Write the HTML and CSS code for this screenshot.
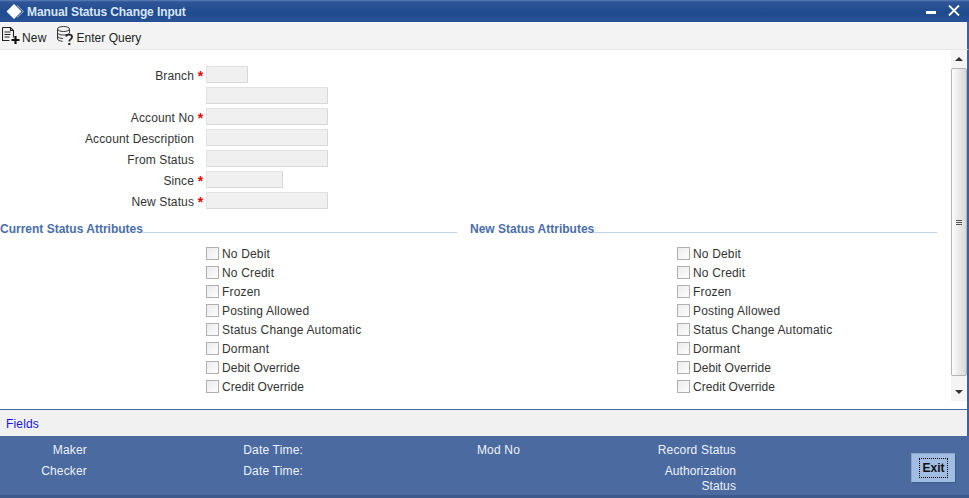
FILE: index.html
```html
<!DOCTYPE html>
<html lang="en">
<head>
<meta charset="utf-8">
<title>Manual Status Change Input</title>
<link rel="stylesheet" href="styles.css">
</head>
<body>
<div class="window">
  <header class="titlebar">
    <div class="title-left">
      <svg class="logo" width="18" height="16" viewBox="0 0 18 16"><path d="M8 0L15.500 7.500 8 15 .5 7.500z" fill="#fff"/><path d="M11 1.500L17.500 7.500 11 13.500" fill="none" stroke="#a9bfdf" stroke-width="1"/></svg>
      <span class="title-text">Manual Status Change Input</span>
    </div>
    <div class="title-controls">
      <svg width="10" height="4" viewBox="0 0 10 4"><rect width="10" height="3" fill="#fff"/></svg>
      <svg width="12" height="11" viewBox="0 0 12 11"><path d="M1 .5l10 10M11 .5l-10 10" stroke="#fff" stroke-width="1.800" fill="none"/></svg>
    </div>
  </header>

  <nav class="toolbar">
    <span class="tool tool-new">
      <svg width="19" height="20" viewBox="0 0 19 20"><path d="M.5 1.500h8l3 3v7M8.500 1.500v3h3M.5 1.500v13h7" fill="none" stroke="#222" stroke-width="1.100"/><path d="M2.500 6h6M2.500 8.500h6M2.500 11h5" stroke="#222"/><path d="M13.500 10v8M9.500 14h8" stroke="#111" stroke-width="2.200"/></svg>
      New
    </span>
    <span class="tool tool-query">
      <svg width="17" height="20" viewBox="0 0 17 20"><ellipse cx="6.500" cy="3" rx="6" ry="2.500" fill="#f3f3f3" stroke="#333"/><path d="M.5 3v10c0 1 2 2 5 2.300M12.500 3v4M.5 6.500c0 1.500 2.500 2.500 6 2.500s6-1 6-2.500M.5 10c0 1.500 2.500 2.300 5.500 2.500" fill="none" stroke="#333"/><path d="M9 10.500c.5-2.300 6-2.600 6 .5 0 2.200-2.700 2-2.700 4.500" fill="none" stroke="#222" stroke-width="1.800"/><rect x="11.300" y="17" width="2" height="2" fill="#222"/></svg>
      Enter Query
    </span>
  </nav>

  <main class="content">
    <div class="scroll-area">
      <form class="form">
        <div class="row"><span class="label">Branch</span><span class="star">*</span><span class="input w-branch"></span></div>
        <div class="row"><span class="label"></span><span class="star"></span><span class="input"></span></div>
        <div class="row"><span class="label">Account No</span><span class="star">*</span><span class="input"></span></div>
        <div class="row"><span class="label">Account Description</span><span class="star"></span><span class="input"></span></div>
        <div class="row"><span class="label">From Status</span><span class="star"></span><span class="input"></span></div>
        <div class="row"><span class="label">Since</span><span class="star">*</span><span class="input w-since"></span></div>
        <div class="row"><span class="label">New Status</span><span class="star">*</span><span class="input"></span></div>
      </form>

      <div class="attributes">
        <section class="group group-current">
          <h2 class="legend"><span>Current Status Attributes</span></h2>
          <ul class="checks">
            <li><i class="box"></i>No Debit</li>
            <li><i class="box"></i>No Credit</li>
            <li><i class="box"></i>Frozen</li>
            <li><i class="box"></i>Posting Allowed</li>
            <li><i class="box"></i>Status Change Automatic</li>
            <li><i class="box"></i>Dormant</li>
            <li class="tight"><i class="box"></i>Debit Override</li>
            <li class="tight"><i class="box"></i>Credit Override</li>
          </ul>
        </section>
        <section class="group group-new">
          <h2 class="legend"><span>New Status Attributes</span></h2>
          <ul class="checks">
            <li><i class="box"></i>No Debit</li>
            <li><i class="box"></i>No Credit</li>
            <li><i class="box"></i>Frozen</li>
            <li><i class="box"></i>Posting Allowed</li>
            <li><i class="box"></i>Status Change Automatic</li>
            <li><i class="box"></i>Dormant</li>
            <li class="tight"><i class="box"></i>Debit Override</li>
            <li class="tight"><i class="box"></i>Credit Override</li>
          </ul>
        </section>
      </div>
    </div>

    <div class="scrollbar">
      <div class="sb-btn"><i class="arrow-up"></i></div>
      <div class="sb-track">
        <div class="sb-thumb"><i class="grip"></i></div>
      </div>
      <div class="sb-btn"><i class="arrow-down"></i></div>
    </div>
  </main>

  <div class="fields"><a class="fields-link">Fields</a></div>

  <footer class="audit">
    <div class="audit-grid">
      <span class="c1">Maker</span><span class="c2">Date Time:</span><span class="c3">Mod No</span><span class="c4">Record Status</span>
      <span class="c1">Checker</span><span class="c2">Date Time:</span><span class="c3"></span><span class="c4 auth">Authorization<br>Status</span>
    </div>
    <button class="exit" type="button"><span>Exit</span></button>
  </footer>
</div>
</body>
</html>
```

FILE: styles.css
```css
* { box-sizing: border-box; }
html, body { margin: 0; padding: 0; }
body {
  width: 969px;
  height: 498px;
  overflow: hidden;
  background: #fff;
  font-family: "Liberation Sans", Arial, sans-serif;
  font-size: 12px;
  letter-spacing: .17px;
  color: #333;
}
.window {
  display: flex;
  flex-direction: column;
  height: 498px;
}
.titlebar {
  flex: 0 0 22px;
  display: flex;
  justify-content: space-between;
  align-items: center;
  padding: 0 9px 0 6px;
  background: linear-gradient(#5a7fb8 0, #2f5597 2px, #1f4a8f 60%, #2a5296 100%);
}
.title-left { display: flex; align-items: center; gap: 3px; }
.logo { margin-top: 2px; }
.title-text { color: #d8e6f8; font-weight: bold; font-size: 12px; letter-spacing: -.1px; margin-top: 1px; }
.title-controls { display: flex; align-items: center; gap: 12px; margin-top: -2px; }
.title-controls svg:first-child { margin-top: 5px; }
.toolbar {
  flex: 0 0 28px;
  display: flex;
  align-items: center;
  gap: 10px;
  padding: 0 0 0 2px;
  background: #f3f3f3;
  border-bottom: 1px solid #e8e8e8;
  border-right: 2px solid #3f5f9f;
  color: #222;
}
.tool { display: flex; align-items: flex-end; gap: 1px; line-height: 16px; }
.tool-new { letter-spacing: .2px; }
.tool-query { letter-spacing: 0; gap: 3px; }
.content {
  flex: 0 0 360px;
  display: flex;
  align-items: flex-start;
  border-right: 2px solid #3f5f9f;
  border-bottom: 1px solid #4a6aa5;
  height: 360px;
}
.scroll-area { flex: 1; padding-top: 14px; }
.form { display: flex; flex-direction: column; }
.row { display: flex; align-items: center; height: 21px; }
.label { width: 194px; padding-top: 2px; text-align: right; color: #333; letter-spacing: .12px; }
.star { width: 12px; padding: 2px 0 0 1px; text-align: center; color: #e00; font-weight: bold; font-size: 14px; letter-spacing: 0; }
.input {
  width: 122px;
  height: 17px;
  background: #f0f0f0;
  border-top: 1px solid #e2e2e2;
  border-left: 1px solid #e2e2e2;
  border-right: 1px solid #d8d8d8;
  border-bottom: 1px solid #d8d8d8;
}
.w-branch { width: 42px; }
.w-since { width: 77px; }
.attributes { display: flex; margin-top: 10px; }
.group-current { width: 470px; }
.group-new { flex: 1; padding-right: 14px; }
.legend {
  margin: 0;
  font-size: 12px;
  font-weight: bold;
  letter-spacing: 0;
  color: #4a6ea9;
  display: flex;
  align-items: center;
  height: 16px;
}
.legend span { white-space: nowrap; }
.legend::after {
  content: "";
  flex: 1;
  height: 1px;
  margin-top: 7px;
  background: #c4d0ee;
}
.group-current .legend { padding-right: 13px; }
.checks {
  list-style: none;
  margin: 7px 0 0;
  padding: 0 0 0 206px;
}
.group-new .checks { padding-left: 207px; }
.checks li {
  display: flex;
  align-items: center;
  gap: 3px;
  height: 19px;
  white-space: nowrap;
}
.checks .tight { letter-spacing: .04px; }
.box {
  display: block;
  width: 13px;
  height: 13px;
  background: linear-gradient(135deg, #ececec, #fdfdfd);
  border: 1px solid #b0b0b0;
}
.scrollbar {
  flex: 0 0 16px;
  height: 351px;
  display: flex;
  flex-direction: column;
  background: #f4f4f4;
}
.sb-btn {
  flex: 0 0 18px;
  display: flex;
  align-items: center;
  justify-content: center;
}
.arrow-up { border: 4px solid transparent; border-top: 0; border-bottom: 4px solid #333; }
.arrow-down { border: 4px solid transparent; border-bottom: 0; border-top: 4px solid #333; }
.sb-track { flex: 1; background: #f4f4f4; }
.sb-thumb {
  height: 308px;
  display: flex;
  align-items: center;
  justify-content: center;
  background: linear-gradient(90deg, #fcfcfc, #d8d8d8);
  border: 1px solid #b4b4b4;
  border-radius: 2px;
}
.grip { width: 6px; height: 5px; border-top: 1px solid #555; border-bottom: 1px solid #555; background: linear-gradient(#555, #555) center / 100% 1px no-repeat; }
.fields {
  flex: 0 0 26px;
  display: flex;
  align-items: center;
  padding: 1px 0 0 6px;
  background: #f1f1f1;
  border-right: 2px solid #3f5f9f;
}
.fields-link { color: #1414e6; }
.audit {
  flex: 1;
  display: flex;
  justify-content: space-between;
  background: #4a6aa0;
  border-bottom: 3px solid #3e5a8c;
  color: #eef2f8;
  padding-right: 13px;
}
.audit-grid {
  display: grid;
  grid-template-columns: 87px 216px 217px 216px;
  grid-auto-rows: 21px;
  padding-top: 4px;
}
.audit-grid > span { text-align: right; line-height: 21px; }
.audit-grid > .auth { line-height: 15px; padding-top: 3px; letter-spacing: .1px; }
.exit {
  align-self: flex-start;
  width: 45px;
  height: 30px;
  margin-top: 17px;
  padding: 0;
  font: bold 12px "Liberation Sans", Arial, sans-serif;
  color: #111;
  background: #a2bde2;
  border: 1px solid #8aa3c9;
  border-right-color: #3f5a88;
  border-bottom-color: #3f5a88;
  display: flex;
  align-items: center;
  justify-content: center;
}
.exit span { border: 1px dotted #000; padding: 2px 2px; }
```
